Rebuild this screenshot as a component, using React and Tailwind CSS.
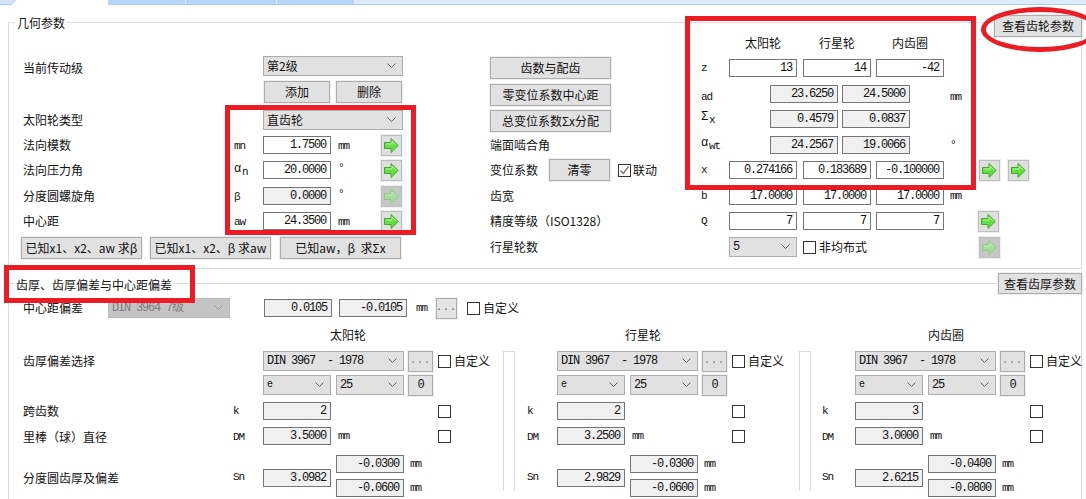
const mono = "font-['Liberation_Mono','Noto_Sans_CJK_SC',monospace] tracking-[-1.2px]";

function Field({ value, disabled, className = "w-[68px]" }) {
  return (
    <div
      className={`h-[18px] shrink-0 border border-[#767676] pr-[4px] text-right text-[12px] leading-[17px] text-[#111] ${mono} ${
        disabled ? "bg-[#f0f0f0]" : "bg-white"
      } ${className}`}
    >
      {value}
    </div>
  );
}

function Select({ value, className = "w-[68px]", muted, code, small }) {
  return (
    <div
      className={`flex h-[20px] shrink-0 items-center justify-between border pl-[3px] pr-[6px] ${
        muted ? "border-[#bbb] bg-[#c4c4c4] text-[#7c7c7c]" : "border-[#adadad] bg-[#e1e1e1] text-[#111]"
      } ${code ? mono : ""} ${className}`}
    >
      <span className={`whitespace-pre leading-none ${small ? "text-[10px]" : "text-[12px]"}`}>{value}</span>
      <svg width="9" height="6" viewBox="0 0 9 6" fill="none" stroke={muted ? "#9a9a9a" : "#5f5f5f"}>
        <path d="M0.5 0.5 L4.5 4.5 L8.5 0.5" />
      </svg>
    </div>
  );
}

function Btn({ children, className = "", disabled }) {
  return (
    <div
      className={`flex shrink-0 items-center justify-center whitespace-pre border border-[#adadad] text-[12px] leading-none shadow-[0_0_0_1px_#efefef] ${
        disabled ? "bg-[#e4e4e4] text-[#777]" : "bg-[#e1e1e1] text-[#111]"
      } ${className}`}
    >
      {children}
    </div>
  );
}

const Dots = () => <span className="font-['Liberation_Mono',monospace] text-[10px] tracking-[1px] text-[#666]">...</span>;

function Arrow({ disabled, className = "" }) {
  return (
    <div
      className={`flex h-[21px] w-[21px] shrink-0 items-center justify-center border shadow-[0_0_0_1px_#efefef] ${
        disabled ? "border-[#c0c0c0] bg-[#c6c6c6]" : "border-[#bdbdbd] bg-[#dfdfdf]"
      } ${className}`}
    >
      <svg width="15" height="15" viewBox="0 0 15 15">
        <polygon
          points="0.5,4.5 7,4.5 7,0.5 14.2,7.5 7,14.5 7,10.5 0.5,10.5"
          fill={disabled ? "#a6dd9a" : "#62e03e"}
          stroke={disabled ? "#8fc987" : "#46a535"}
        />
        <path d="M2 6 H8 V3 L12 7" fill="none" stroke={disabled ? "#c4eabc" : "#b8f5a0"} />
      </svg>
    </div>
  );
}

function Check({ checked, className = "" }) {
  return (
    <div className={`flex h-[13px] w-[13px] shrink-0 items-center justify-center border border-[#333] bg-white ${className}`}>
      {checked && (
        <svg width="11" height="11" viewBox="0 0 11 11" fill="none" stroke="#777" strokeWidth="1.3">
          <path d="M1.5 5.5 L4.2 8.5 L9.5 1.5" />
        </svg>
      )}
    </div>
  );
}

function Sym({ children, className = "w-[30px]" }) {
  return <span className={`shrink-0 text-[11px] leading-none text-[#111] ${mono} tracking-[-0.6px] ${className}`}>{children}</span>;
}

const Greek = ({ g, s }) => (
  <span className="relative top-[1px]">
    <span className="relative top-[-3px] text-[12px]">{g}</span>
    <span className="ml-[2px]">{s}</span>
  </span>
);

const Label = ({ children, className = "" }) => <span className={`shrink-0 whitespace-pre text-[12px] leading-none text-[#111] ${className}`}>{children}</span>;

function LeftRow({ label, sym, value, unit, disabled, className }) {
  return (
    <div className={`flex h-[18px] items-center ${className}`}>
      <Label className="w-[210px]">{label}</Label>
      <Sym className="mt-[2px] w-[30px] pl-[1px]">{sym}</Sym>
      <Field value={value} disabled={disabled} />
      <Sym className={`w-[50px] pl-[7px] ${unit === "°" ? "mb-[4px]" : "mt-[2px]"}`}>{unit}</Sym>
      <Arrow disabled={disabled} />
    </div>
  );
}

function GearCells({ sym, values, trailing, className }) {
  return (
    <div className={`flex h-[18px] items-center ${className}`}>
      <Sym className="w-[28px]">{sym}</Sym>
      <Field value={values[0]} />
      <Field value={values[1]} className="ml-[6px] w-[68px]" />
      <Field value={values[2]} className="ml-[5px] w-[68px]" />
      {trailing}
    </div>
  );
}

function CalcCells({ sym, values, unit, className, symClass = "w-[69px]", unitClass = "ml-[40px]" }) {
  return (
    <div className={`flex h-[18px] items-center ${className}`}>
      <Sym className={symClass}>{sym}</Sym>
      <Field value={values[0]} disabled />
      <Field value={values[1]} disabled className="ml-[4px] w-[68px]" />
      <Sym className={unitClass}>{unit}</Sym>
    </div>
  );
}

function GeometryGroup() {
  return (
    <section className="relative ml-[8px] mt-[17px] flex h-[247px] w-[1074px] border border-[#dcdcdc] pl-[14px]">
      <span className="absolute left-[6px] top-[-7px] bg-white px-[2px] text-[12px] leading-[14px] text-[#111]">几何参数</span>
      <Btn className="absolute right-[-1px] top-[-8px] h-[22px] w-[88px]">查看齿轮参数</Btn>

      <div className="w-[467px] shrink-0">
        <div className="mt-[33px] flex h-[20px] items-center">
          <Label className="mt-[3px] w-[240px]">当前传动级</Label>
          <Select value="第2级" className="w-[140px]" />
        </div>
        <div className="ml-[241px] mt-[5px] flex h-[22px] gap-[6px]">
          <Btn className="w-[66px]">添加</Btn>
          <Btn className="w-[66px]">删除</Btn>
        </div>
        <div className="mt-[7px] flex h-[20px] items-center">
          <Label className="w-[240px]">太阳轮类型</Label>
          <Select value="直齿轮" className="w-[140px]" />
        </div>
        <LeftRow className="mt-[6px]" label="法向模数" sym="mn" value="1.7500" unit="mm" />
        <LeftRow className="mt-[7px]" label="法向压力角" sym={<Greek g="α" s="n" />} value="20.0000" unit="°" />
        <LeftRow className="mt-[8px]" label="分度圆螺旋角" sym="β" value="0.0000" unit="°" disabled />
        <LeftRow className="mt-[7px]" label="中心距" sym="aw" value="24.3500" unit="mm" />
        <div className="ml-[-2px] mt-[7px] flex h-[22px]">
          <Btn className="w-[121px]">已知x1、x2、aw 求β</Btn>
          <Btn className="ml-[8px] w-[121px]">已知x1、x2、β 求aw</Btn>
          <Btn className="ml-[9px] w-[121px]">已知aw，β  求Σx</Btn>
        </div>
      </div>

      <div className="w-[211px] shrink-0">
        <Btn className="mt-[34px] h-[22px] w-[121px]">齿数与配齿</Btn>
        <Btn className="mt-[5px] h-[22px] w-[121px]">零变位系数中心距</Btn>
        <Btn className="mt-[4px] h-[22px] w-[121px]">总变位系数Σx分配</Btn>
        <div className="mt-[4px] flex h-[18px] items-center">
          <Label>端面啮合角</Label>
        </div>
        <div className="mt-[7px] flex h-[18px] items-center">
          <Label className="w-[59px]">变位系数</Label>
          <Btn className="h-[22px] w-[61px]">清零</Btn>
          <Check checked className="ml-[8px]" />
          <Label className="ml-[2px]">联动</Label>
        </div>
        <div className="mt-[8px] flex h-[18px] items-center">
          <Label>齿宽</Label>
        </div>
        <div className="mt-[7px] flex h-[18px] items-center">
          <Label>精度等级（ISO1328）</Label>
        </div>
        <div className="mt-[8px] flex h-[18px] items-center">
          <Label>行星轮数</Label>
        </div>
      </div>

      <div className="grow">
        <div className="ml-[28px] mt-[13px] flex h-[14px] items-center">
          <Label className="w-[68px] text-center">太阳轮</Label>
          <Label className="ml-[6px] w-[68px] text-center">行星轮</Label>
          <Label className="ml-[5px] w-[68px] text-center">内齿圈</Label>
        </div>
        <GearCells className="mt-[9px]" sym="z" values={["13", "14", "-42"]} />
        <CalcCells
          className="mt-[8px]"
          sym="ad"
          values={["23.6250", "24.5000"]}
          unit="mm"
          symClass="mt-[6px] w-[69px]"
          unitClass="ml-[40px] mt-[6px]"
        />
        <CalcCells className="mt-[7px]" sym={<Greek g="Σ" s="x" />} values={["0.4579", "0.0837"]} />
        <CalcCells className="mt-[8px]" sym={<Greek g="α" s="wt" />} values={["24.2567", "19.0066"]} unit="°" />
        <GearCells
          className="mt-[7px]"
          sym="x"
          values={["0.274166", "0.183689", "-0.100000"]}
          trailing={
            <>
              <Arrow className="ml-[35px]" />
              <Arrow className="ml-[8px]" />
            </>
          }
        />
        <GearCells
          className="mt-[8px]"
          sym="b"
          values={["17.0000", "17.0000", "17.0000"]}
          trailing={<Sym className="ml-[6px]">mm</Sym>}
        />
        <GearCells className="mt-[7px]" sym="Q" values={["7", "7", "7"]} trailing={<Arrow className="ml-[34px]" />} />
        <div className="mt-[8px] flex h-[18px] items-center">
          <span className="w-[28px] shrink-0" />
          <Select value="5" className="w-[68px]" code />
          <Check className="ml-[6px]" />
          <Label className="ml-[3px]">非均布式</Label>
          <Arrow disabled className="ml-[112px]" />
        </div>
      </div>
    </section>
  );
}

function ToothPanel({ title, titleClass, rootClass, symClass, labels, k, dm, sn, up, low }) {
  return (
    <div className={`shrink-0 ${rootClass}`}>
      <div className={`mt-[10px] h-[14px] text-[12px] leading-[14px] text-[#111] ${titleClass}`}>{title}</div>
      <div className="mt-[9px] flex h-[20px] items-center">
        {labels && <Label className="w-[210px]">{labels[0]}</Label>}
        <span className={`shrink-0 ${symClass}`} />
        <Select value="DIN 3967  - 1978" code className="w-[141px]" />
        <Btn className="ml-[4px] h-[21px] w-[25px]"><Dots /></Btn>
        <Check className="ml-[5px]" />
        <Label className="ml-[3px]">自定义</Label>
      </div>
      <div className="mt-[4px] flex h-[20px] items-center">
        {labels && <span className="w-[210px] shrink-0" />}
        <span className={`shrink-0 ${symClass}`} />
        <Select value="e" code small />
        <Select value="25" code className="ml-[5px] w-[68px]" />
        <Btn className={`ml-[4px] h-[21px] w-[25px] ${mono}`}>0</Btn>
      </div>
      <div className="mt-[7px] flex h-[18px] items-center">
        {labels && <Label className="w-[210px]">{labels[1]}</Label>}
        <Sym className={symClass}>k</Sym>
        <Field value={k} disabled />
        <Check className="ml-[107px]" />
      </div>
      <div className="mt-[7px] flex h-[18px] items-center">
        {labels && <Label className="mt-[2px] w-[210px]">{labels[2]}</Label>}
        <Sym className={`mt-[2px] ${symClass}`}>DM</Sym>
        <Field value={dm} disabled />
        <Sym className="w-[107px] pl-[7px]">mm</Sym>
        <Check />
      </div>
      <div className="mt-[10px] flex h-[42px] items-center">
        {labels && <Label className="mt-[3px] w-[210px]">{labels[3]}</Label>}
        <Sym className={`mt-[3px] ${symClass}`}>Sn</Sym>
        <Field value={sn} disabled className="mt-[3px] w-[68px]" />
        <div className="ml-[5px] flex flex-col gap-[6px]">
          <div className="flex items-center">
            <Field value={up} disabled />
            <Sym className="ml-[6px]">mm</Sym>
          </div>
          <div className="flex items-center">
            <Field value={low} disabled />
            <Sym className="ml-[6px]">mm</Sym>
          </div>
        </div>
      </div>
    </div>
  );
}

const SlimBox = () => <div className="mt-[33px] h-[140px] w-[12px] shrink-0 border border-b-0 border-[#dcdcdc]" />;

function ToothGroup() {
  return (
    <section className="relative ml-[8px] mt-[14px] h-[220px] w-[1074px] border border-b-0 border-[#dcdcdc] pl-[14px]">
      <span className="absolute left-[5px] top-[-6px] bg-white px-[2px] text-[12px] leading-[14px] text-[#111]">齿厚、齿厚偏差与中心距偏差</span>
      <Btn className="absolute right-[-1px] top-[-11px] h-[21px] w-[84px]">查看齿厚参数</Btn>

      <div className="mt-[14px] flex h-[20px] items-center">
        <Label className="w-[85px]">中心距偏差</Label>
        <Select value="DIN 3964 7级" muted code className="w-[122px]" />
        <Field value="0.0105" disabled className="ml-[34px] w-[68px]" />
        <Field value="-0.0105" disabled className="ml-[7px] w-[68px]" />
        <Sym className="w-[29px] pl-[9px]">mm</Sym>
        <Btn disabled className="h-[21px] w-[21px]"><Dots /></Btn>
        <Check className="ml-[10px]" />
        <Label className="ml-[3px]">自定义</Label>
      </div>

      <div className="flex">
        <ToothPanel
          rootClass="w-[480px]"
          title="太阳轮"
          titleClass="ml-[307px]"
          symClass="w-[30px]"
          labels={["齿厚偏差选择", "跨齿数", "里棒（球）直径", "分度圆齿厚及偏差"]}
          k="2"
          dm="3.5000"
          sn="3.0982"
          up="-0.0300"
          low="-0.0600"
        />
        <SlimBox />
        <ToothPanel
          rootClass="w-[284px] pl-[12px]"
          title="行星轮"
          titleClass="ml-[98px]"
          symClass="w-[30px]"
          k="2"
          dm="3.2500"
          sn="2.9829"
          up="-0.0300"
          low="-0.0600"
        />
        <SlimBox />
        <ToothPanel
          rootClass="w-[271px] pl-[11px]"
          title="内齿圈"
          titleClass="ml-[106px]"
          symClass="w-[33px]"
          k="3"
          dm="3.0000"
          sn="2.6215"
          up="-0.0400"
          low="-0.0800"
        />
      </div>
    </section>
  );
}

function TabStrip() {
  return (
    <div className="flex h-[5px] overflow-hidden">
      <svg width="108" height="5" viewBox="0 0 108 5" className="shrink-0">
        <polygon points="0,0 17,0 13,4 0,4" fill="#d4e4f8" />
        <line x1="0" y1="4.5" x2="12" y2="4.5" stroke="#a9cdf5" />
      </svg>
      <div className="flex grow border-b border-[#a9cdf5]">
        <div className="w-[78px] border-r border-[#e4eefb] bg-[#b5d4fb]" />
        <div className="w-[91px] border-r border-[#e4eefb] bg-[#b5d4fb]" />
        <div className="w-[78px] border-r border-[#e4eefb] bg-[#b5d4fb]" />
        <div className="grow bg-[#dcebfd]" />
      </div>
    </div>
  );
}

export default function App() {
  return (
    <div className="relative h-[499px] w-[1086px] overflow-hidden bg-white font-['Noto_Sans_CJK_SC','Liberation_Sans',sans-serif] text-[12px]">
      <TabStrip />
      <GeometryGroup />
      <ToothGroup />

      {/* red notes drawn over the form */}
      <div className="absolute left-[225px] top-[105px] h-[130px] w-[191px] border-[5px] border-[#ed1c24]" />
      <div className="absolute left-[685px] top-[16px] h-[174px] w-[291px] border-[5px] border-[#ed1c24]" />
      <div className="absolute left-[4px] top-[265px] h-[38px] w-[191px] border-[5px] border-[#ed1c24]" />
      <div className="absolute left-[981px] top-[7px] h-[45px] w-[118px] rounded-[50%] border-[5px] border-[#ed1c24]" />
    </div>
  );
}
